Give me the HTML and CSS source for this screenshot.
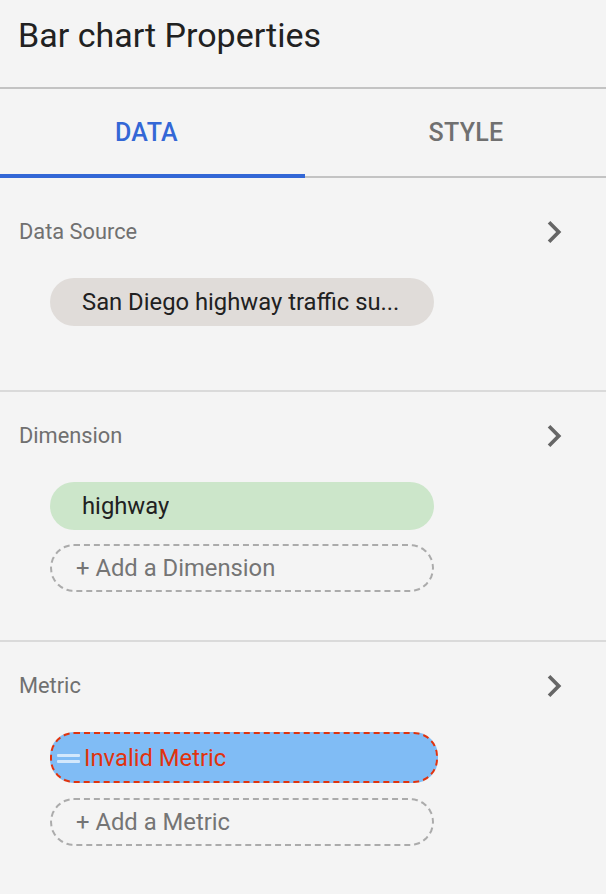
FILE: index.html
```html
<!DOCTYPE html>
<html>
<head>
<meta charset="utf-8">
<link rel="stylesheet" href="styles.css">
</head>
<body>
<div class="panel">
  <header class="header">
    <h1 class="title">Bar chart Properties</h1>
  </header>
  <nav class="tabs">
    <div class="tab tab-active">DATA</div>
    <div class="tab tab-style">STYLE</div>
  </nav>

  <section class="section section-first">
    <div class="section-head">
      <span class="label">Data Source</span>
      <svg class="chevron" viewBox="0 0 24 24"><path d="M10 6L8.59 7.41 13.17 12l-4.58 4.59L10 18l6-6z"/></svg>
    </div>
    <div class="chips">
      <div class="chip chip-source"><span class="chip-text">San Diego highway traffic su...</span></div>
    </div>
  </section>

  <section class="section">
    <div class="section-head">
      <span class="label">Dimension</span>
      <svg class="chevron" viewBox="0 0 24 24"><path d="M10 6L8.59 7.41 13.17 12l-4.58 4.59L10 18l6-6z"/></svg>
    </div>
    <div class="chips">
      <div class="chip chip-dim"><span class="chip-text">highway</span></div>
      <div class="chip chip-add"><span class="chip-text">+ Add a Dimension</span></div>
    </div>
  </section>

  <section class="section section-last">
    <div class="section-head">
      <span class="label">Metric</span>
      <svg class="chevron" viewBox="0 0 24 24"><path d="M10 6L8.59 7.41 13.17 12l-4.58 4.59L10 18l6-6z"/></svg>
    </div>
    <div class="chips">
      <div class="chip chip-invalid">
        <span class="handle"><i></i><i></i></span>
        <span class="chip-text">Invalid Metric</span>
      </div>
      <div class="chip chip-add"><span class="chip-text">+ Add a Metric</span></div>
    </div>
  </section>
</div>
</body>
</html>
```

FILE: styles.css
```css
* { box-sizing: border-box; }
html, body {
  margin: 0;
  padding: 0;
  background: #f4f4f4;
  font-family: Roboto, "Liberation Sans", sans-serif;
}
.panel {
  width: 606px;
  min-height: 894px;
  background: #f4f4f4;
}
.header {
  height: 89px;
  border-bottom: 2px solid #c3c3c3;
  display: flex;
  align-items: flex-start;
  padding: 15px 0 0 18px;
}
.title {
  margin: 0;
  font-size: 34px;
  font-weight: 400;
  color: #212121;
  line-height: 40px;
}
.tabs {
  display: flex;
  height: 89px;
  border-bottom: 2px solid #c3c3c3;
}
.tab {
  flex: 0 0 auto;
  display: flex;
  align-items: center;
  justify-content: center;
  font-size: 25px;
  font-weight: 500;
  letter-spacing: 0.3px;
  color: #707070;
}
.tab-active {
  width: 305px;
  padding-right: 12px;
  padding-top: 2px;
  color: #3367d6;
  border-bottom: 4px solid #3367d6;
  margin-bottom: -2px;
}
.tab-style {
  width: 301px;
  padding-left: 21px;
}
.section {
  border-bottom: 2px solid #dadada;
  padding: 32px 0 48px 0;
}
.section-first { padding: 42px 0 64px 0; }
.section-last { border-bottom: none; padding-bottom: 40px; }
.section-head {
  display: flex;
  align-items: center;
  justify-content: space-between;
  height: 24px;
  padding: 0 41px 0 19px;
}
.label {
  font-size: 21.8px;
  color: #707070;
  line-height: 24px;
}
.chevron {
  width: 44px;
  height: 44px;
  fill: #666666;
  margin-right: -11px;
}
.chips {
  display: flex;
  flex-direction: column;
  align-items: flex-start;
  gap: 14px;
  margin-top: 34px;
  padding-left: 50px;
}
.chip {
  width: 384px;
  height: 48px;
  border-radius: 24px;
  display: flex;
  align-items: center;
  padding: 0 24px 0 32px;
  font-size: 23.8px;
  color: #212121;
  white-space: nowrap;
  overflow: hidden;
}
.chip-text {
  overflow: hidden;
  text-overflow: ellipsis;
}
.chip-source { background: #e0dcd9; }
.chip-dim { background: #cce6ca; }
.chip-add {
  border: 2px dashed #ababab;
  color: #757575;
  padding-left: 24px;
}
.chip-invalid {
  box-sizing: content-box;
  width: 384px;
  height: 47px;
  padding: 0;
  background: #80bcf5;
  border: 2px dashed #e0330e;
  color: #e0330e;
  margin-bottom: 1px;
}
.handle {
  display: flex;
  flex-direction: column;
  gap: 3px;
  width: 23px;
  margin: 2px 4px 0 5px;
}
.handle i {
  display: block;
  height: 3px;
  background: rgba(255,255,255,0.65);
  border-radius: 1px;
}
```
